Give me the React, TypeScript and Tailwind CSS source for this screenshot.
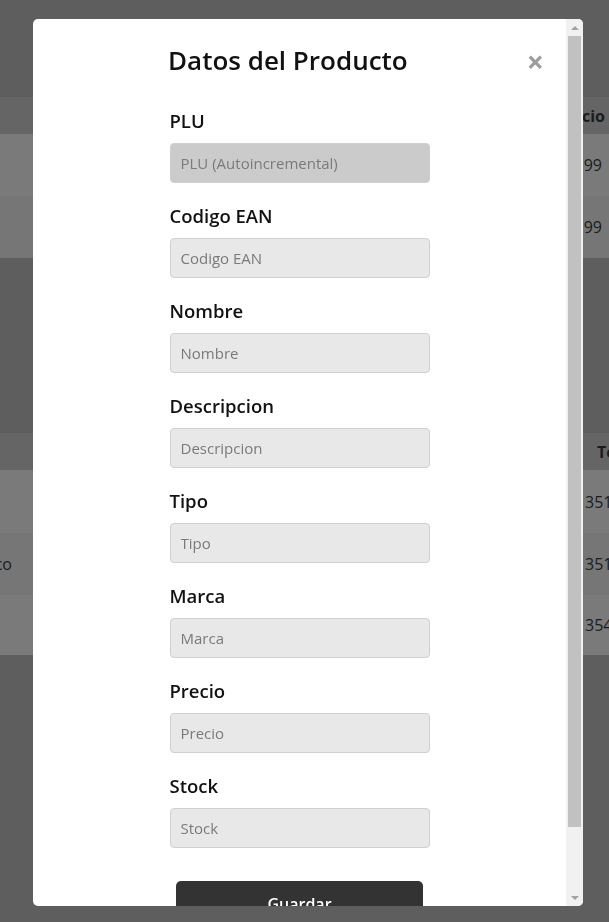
import React from 'react';

const fields = [
  { label: 'PLU', placeholder: 'PLU (Autoincremental)', disabled: true },
  { label: 'Codigo EAN', placeholder: 'Codigo EAN' },
  { label: 'Nombre', placeholder: 'Nombre' },
  { label: 'Descripcion', placeholder: 'Descripcion' },
  { label: 'Tipo', placeholder: 'Tipo' },
  { label: 'Marca', placeholder: 'Marca' },
  { label: 'Precio', placeholder: 'Precio' },
  { label: 'Stock', placeholder: 'Stock' },
];

const font = { fontFamily: '"Open Sans", "Noto Sans", sans-serif' };

const App = () => {
  return (
    <div className="min-h-screen bg-[#5e5e5e] overflow-hidden text-[#1c1c1c]" style={font}>
      {/* Page behind the overlay */}
      <div className="h-[97px]" />
      <div className="h-[37px] bg-[#656565] flex items-center justify-end pr-[4px] font-bold text-[16px] whitespace-nowrap">
        Precio
      </div>
      <div className="h-[62px] bg-[#7a7a7a] flex items-center justify-end pr-[7px] text-[16px]">19.99</div>
      <div className="h-[62px] bg-[#767676] flex items-center justify-end pr-[7px] text-[16px]">129.99</div>
      <div className="h-[175px]" />
      <div className="h-[37px] bg-[#656565] flex items-center pl-[597px] font-bold text-[16px] whitespace-nowrap">
        Telefono
      </div>
      {['3512345678', '3511234567', '3541234567'].map((tel, i) => (
        <div
          key={tel}
          className={`flex items-center text-[16px] whitespace-nowrap ${
            i === 1 ? 'h-[62px] bg-[#767676]' : i === 0 ? 'h-[63px] bg-[#7a7a7a]' : 'h-[60px] bg-[#7a7a7a]'
          }`}
        >
          <div className="w-[12px] shrink-0 flex justify-end">{i === 1 ? 'Blanco' : ''}</div>
          <div className="ml-[573px] shrink-0">{tel}</div>
        </div>
      ))}

      {/* Modal */}
      <div className="fixed left-[33px] top-[19px] w-[550px] h-[887px] bg-white rounded-[5px] overflow-hidden flex">
        <div className="flex-1 overflow-hidden">
          <div className="flex items-center pt-[22px]">
            <h2 className="ml-[135px] text-[26px] leading-[38px] font-semibold text-[#111]">Datos del Producto</h2>
            <button className="ml-auto mr-[22px] mt-[3px] text-[30px] leading-none font-bold text-[#9d9d9d]">×</button>
          </div>
          <form className="w-[260px] mx-auto mt-[30px]">
            {fields.map((f) => (
              <div key={f.label} className="mb-[21px]">
                <label className="block text-[18.5px] leading-[24px] font-semibold text-[#111] mb-[10px]">{f.label}</label>
                <input
                  disabled={f.disabled}
                  placeholder={f.placeholder}
                  className={`block w-full h-[40px] rounded-[4px] border border-[#cfcfcf] px-[10px] text-[15px] placeholder:text-[#7a7a7a] outline-none ${
                    f.disabled ? 'bg-[#cbcbcb]' : 'bg-[#e8e8e8]'
                  }`}
                  style={font}
                />
              </div>
            ))}
            <button
              type="button"
              className="block mx-auto mt-[33px] w-[247px] h-[46px] rounded-[5px] bg-[#333333] text-white text-[16px] font-semibold"
            >
              Guardar
            </button>
          </form>
        </div>
        {/* Scrollbar */}
        <div className="w-[17px] bg-[#f1f1f1] flex flex-col items-center">
          <div className="h-[17px] flex items-center justify-center">
            <div className="w-0 h-0 border-x-[4px] border-x-transparent border-b-[4px] border-b-[#a3a3a3]" />
          </div>
          <div className="flex-1 w-full px-[2px]">
            <div className="h-[791px] bg-[#c1c1c1]" />
          </div>
          <div className="h-[17px] flex items-center justify-center">
            <div className="w-0 h-0 border-x-[4px] border-x-transparent border-t-[4px] border-t-[#a3a3a3]" />
          </div>
        </div>
      </div>
    </div>
  );
};

export default App;
